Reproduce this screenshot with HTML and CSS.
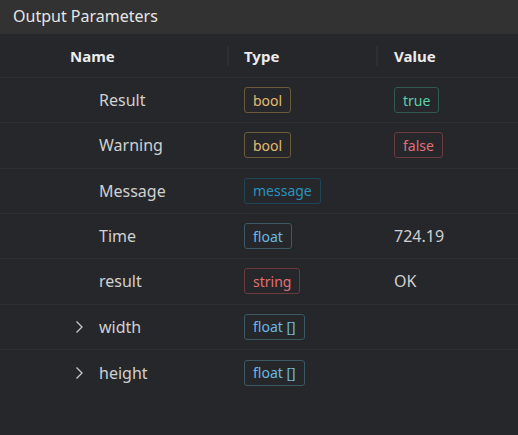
FILE: index.html
```html
<!DOCTYPE html>
<html>
<head>
<meta charset="utf-8">
<link rel="stylesheet" href="styles.css">
</head>
<body>
<div class="panel">
  <div class="title">Output Parameters</div>
  <div class="table">
    <div class="row head">
      <div class="c-name"><span class="htext">Name</span></div>
      <div class="c-type"><span class="div"></span><span class="htext">Type</span></div>
      <div class="c-val"><span class="div"></span><span class="htext">Value</span></div>
    </div>
    <div class="row">
      <div class="c-name"><span class="chev"></span><span>Result</span></div>
      <div class="c-type"><span class="badge b-bool">bool</span></div>
      <div class="c-val"><span class="badge b-true">true</span></div>
    </div>
    <div class="row">
      <div class="c-name"><span class="chev"></span><span>Warning</span></div>
      <div class="c-type"><span class="badge b-bool">bool</span></div>
      <div class="c-val"><span class="badge b-false">false</span></div>
    </div>
    <div class="row">
      <div class="c-name"><span class="chev"></span><span>Message</span></div>
      <div class="c-type"><span class="badge b-msg">message</span></div>
      <div class="c-val"></div>
    </div>
    <div class="row">
      <div class="c-name"><span class="chev"></span><span>Time</span></div>
      <div class="c-type"><span class="badge b-float">float</span></div>
      <div class="c-val"><span class="vtext">724.19</span></div>
    </div>
    <div class="row">
      <div class="c-name"><span class="chev"></span><span>result</span></div>
      <div class="c-type"><span class="badge b-str">string</span></div>
      <div class="c-val"><span class="vtext">OK</span></div>
    </div>
    <div class="row">
      <div class="c-name"><span class="chev"><svg width="9" height="14" viewBox="0 0 9 14"><path d="M1.5 1.5 L7 7 L1.5 12.5" fill="none" stroke="#c8c8c8" stroke-width="1.3"/></svg></span><span>width</span></div>
      <div class="c-type"><span class="badge b-float">float []</span></div>
      <div class="c-val"></div>
    </div>
    <div class="row last">
      <div class="c-name"><span class="chev"><svg width="9" height="14" viewBox="0 0 9 14"><path d="M1.5 1.5 L7 7 L1.5 12.5" fill="none" stroke="#c8c8c8" stroke-width="1.3"/></svg></span><span>height</span></div>
      <div class="c-type"><span class="badge b-float">float []</span></div>
      <div class="c-val"></div>
    </div>
  </div>
</div>
</body>
</html>
```
FILE: styles.css
```css
html, body {
  margin: 0;
  padding: 0;
  background: #26272b;
}
body {
  width: 518px;
  height: 435px;
  overflow: hidden;
  font-family: "Noto Sans", "Open Sans", sans-serif;
  color: #d0d0d0;
}
.panel {
  display: flex;
  flex-direction: column;
  height: 435px;
}
.title {
  height: 34px;
  box-sizing: border-box;
  background: #323232;
  color: #e6e6e6;
  font-size: 16px;
  display: flex;
  align-items: center;
  padding-left: 13px;
  padding-bottom: 2px;
}
.table {
  display: flex;
  flex-direction: column;
}
.row {
  display: grid;
  grid-template-columns: 227px 149px 1fr;
  height: 45.33px;
  box-sizing: border-box;
  border-bottom: 1px solid #2d2e32;
  font-size: 16px;
}
.row.head {
  height: 44px;
  font-size: 15px;
}
.row.last {
  border-bottom: none;
}
.row > div {
  display: flex;
  align-items: center;
}
.c-name {
  padding-left: 75px;
}
.head .c-name {
  padding-left: 70px;
}
.chev {
  width: 24px;
  display: flex;
  align-items: center;
}
.c-type {
  padding-left: 17px;
}
.c-val {
  padding-left: 18px;
}
.head .c-type, .head .c-val {
  padding-left: 0;
}
.div {
  width: 2px;
  height: 20px;
  background: #2e2f33;
  margin-right: 15px;
}
.head .c-val .div {
  margin-right: 16px;
}
.htext {
  font-weight: 700;
  color: #ececec;
}
.badge {
  display: inline-flex;
  align-items: center;
  height: 26px;
  box-sizing: border-box;
  padding: 0 8px;
  border: 1px solid;
  border-radius: 3px;
  font-size: 14px;
}
.b-bool { color: #e3bb6f; border-color: #6b5b3c; }
.b-true { color: #5ed0a6; border-color: #30594f; }
.b-false { color: #e07078; border-color: #6a3b3f; }
.b-msg { color: #2b93bd; border-color: #1e4558; }
.b-float { color: #6ab8e2; border-color: #3b5866; }
.b-str { color: #e26f72; border-color: #6a3a3c; }
.vtext {
  color: #d0d0d0;
}
```
